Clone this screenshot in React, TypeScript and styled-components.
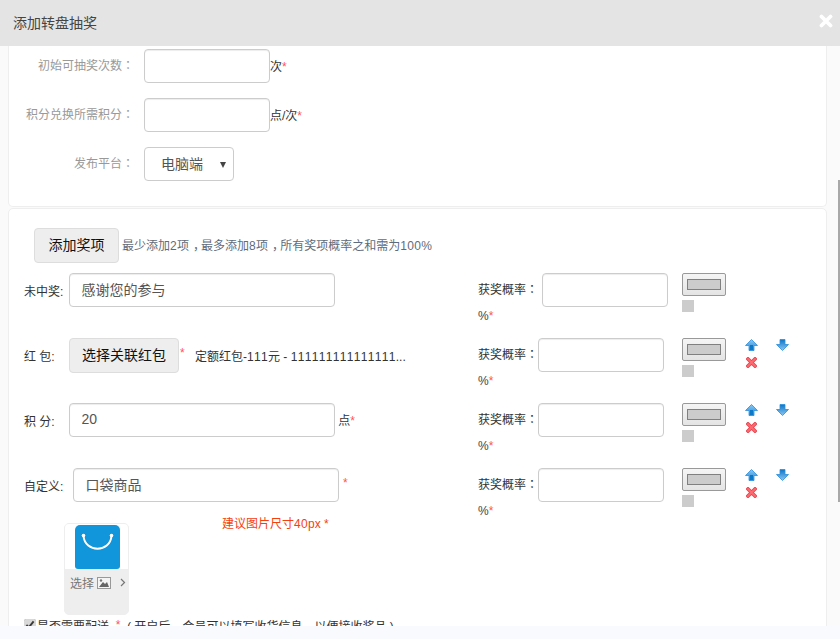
import styled, { createGlobalStyle } from 'styled-components'

const GlobalStyle = createGlobalStyle`
  html, body {
    margin: 0;
    height: 100%;
    overflow: hidden;
    background: #fafafa;
    font-family: "Liberation Sans", "Noto Sans CJK SC", sans-serif;
    font-size: 12px;
    color: #333;
  }
  * {
    box-sizing: border-box;
  }
`

const UpArrow = () => (
  <svg width="13" height="12" viewBox="0 0 13 12">
    <defs>
      <linearGradient id="upFill" x1="0" y1="0" x2="0" y2="1">
        <stop offset="0" stopColor="#8cc8f4" />
        <stop offset="1" stopColor="#1c86d6" />
      </linearGradient>
    </defs>
    <path d="M6.5 0.5 L12.5 6.5 H9 V11.5 H4 V6.5 H0.5 Z" fill="url(#upFill)" stroke="#2b8fdc" strokeWidth="0.8" />
    <rect x="5" y="6" width="3" height="5" fill="#0c78c8" />
  </svg>
)

const DownArrow = () => (
  <svg width="13" height="12" viewBox="0 0 13 12">
    <defs>
      <linearGradient id="downFill" x1="0" y1="0" x2="0" y2="1">
        <stop offset="0" stopColor="#0c74c4" />
        <stop offset="1" stopColor="#8cc8f4" />
      </linearGradient>
    </defs>
    <path d="M4 0.5 H9 V5.5 H12.5 L6.5 11.5 L0.5 5.5 H4 Z" fill="url(#downFill)" stroke="#2b8fdc" strokeWidth="0.8" />
  </svg>
)

const DeleteIcon = () => (
  <svg width="11" height="11" viewBox="0 0 11 11">
    <path d="M2 2 L9 9 M9 2 L2 9" stroke="#e8404c" strokeWidth="3.6" strokeLinecap="square" />
    <path d="M2 2 L9 9 M9 2 L2 9" stroke="#fb6a70" strokeWidth="2" strokeLinecap="square" />
  </svg>
)

const CloseIcon = () => (
  <svg width="14" height="14" viewBox="0 0 14 14">
    <path d="M2.5 2.5 L11.5 11.5 M11.5 2.5 L2.5 11.5" stroke="#fff" strokeWidth="3.8" strokeLinecap="round" />
  </svg>
)

const BagIcon = () => (
  <svg width="45" height="44" viewBox="0 0 45 44">
    <path d="M5 0 H40 A5 5 0 0 1 45 5 V41 A3 3 0 0 1 42 44 H3 A3 3 0 0 1 0 41 V5 A5 5 0 0 1 5 0 Z" fill="#1296db" />
    <path d="M8.5 11 C10 28 35 28 36.5 11" fill="none" stroke="#fff" strokeWidth="2" />
    <circle cx="8.5" cy="10.5" r="1.8" fill="#fff" />
    <circle cx="36.5" cy="10.5" r="1.8" fill="#fff" />
  </svg>
)

const PictureIcon = () => (
  <svg width="14" height="12" viewBox="0 0 14 12">
    <rect x="0.5" y="0.5" width="13" height="11" fill="#f4f4f4" stroke="#999" />
    <path d="M2 10 L6 5 L8 7 L10 5 L12 10 Z" fill="#666" />
    <circle cx="4" cy="3.5" r="1.2" fill="#777" />
  </svg>
)

const ChevronIcon = () => (
  <svg width="6" height="9" viewBox="0 0 6 9">
    <path d="M1 1 L4.5 4.5 L1 8" fill="none" stroke="#777" strokeWidth="1.2" />
  </svg>
)

const ColorPicker = () => (
  <PickerColumn>
    <PickerButton><PickerSwatch /></PickerButton>
    <PickerChip />
  </PickerColumn>
)

type ProbabilityProps = { wide?: boolean, tools?: boolean }

const Probability = ({ wide, tools }: ProbabilityProps) => (
  <>
    <ProbabilityColumn>
      <ProbabilityField>
        <ProbabilityLabel $wide={wide}>获奖概率<Colon>：</Colon></ProbabilityLabel>
        <TextInput $width={126} readOnly />
      </ProbabilityField>
      <Percent>%<Star>*</Star></Percent>
    </ProbabilityColumn>
    <ColorPicker />
    {tools && <Tools>
      <ToolRow>
        <UpArrow />
        <DownArrow />
      </ToolRow>
      <DeleteSlot><DeleteIcon /></DeleteSlot>
    </Tools>}
  </>
)

const App = () => (
  <Page>
    <GlobalStyle />
    <Header>
      <Title>添加转盘抽奖</Title>
      <CloseButton><CloseIcon /></CloseButton>
    </Header>
    <Body>
      <SettingsCard>
        <SettingRow>
          <SettingLabel>初始可抽奖次数<Colon>：</Colon></SettingLabel>
          <TextInput $width={126} readOnly />
          <Unit>次<Star>*</Star></Unit>
        </SettingRow>
        <SettingRow>
          <SettingLabel>积分兑换所需积分<Colon>：</Colon></SettingLabel>
          <TextInput $width={126} readOnly />
          <Unit>点/次<Star>*</Star></Unit>
        </SettingRow>
        <SettingRow>
          <SettingLabel>发布平台<Colon>：</Colon></SettingLabel>
          <SelectBox>电脑端</SelectBox>
        </SettingRow>
      </SettingsCard>
      <PrizeCard>
        <AddRow>
          <GrayButton $width={85}>添加奖项</GrayButton>
          <Hint>
            最少添加<Digits>2</Digits>项<Comma>，</Comma>最多添加<Digits>8</Digits>项<Comma>，</Comma>所有奖项概率之和需为<Digits>100</Digits>%
          </Hint>
        </AddRow>
        <PrizeRow>
          <PrizeMain>
            <PrizeLabel>未中奖:</PrizeLabel>
            <TextInput $width={266} defaultValue="感谢您的参与" readOnly />
          </PrizeMain>
          <Probability wide />
        </PrizeRow>
        <PrizeRow>
          <PrizeMain>
            <PrizeLabel>红 包:</PrizeLabel>
            <GrayButton $width={110}>选择关联红包</GrayButton>
            <FieldStar>*</FieldStar>
            <LinkedPacket>定额红包-<Digits>111</Digits>元 - <Digits>111111111111111</Digits>...</LinkedPacket>
          </PrizeMain>
          <Probability tools />
        </PrizeRow>
        <PrizeRow>
          <PrizeMain>
            <PrizeLabel>积 分:</PrizeLabel>
            <TextInput $width={266} defaultValue="20" readOnly />
            <Unit>&nbsp;点<Star>*</Star></Unit>
          </PrizeMain>
          <Probability tools />
        </PrizeRow>
        <PrizeRow $short>
          <PrizeMain>
            <PrizeLabel $wide>自定义:</PrizeLabel>
            <TextInput $width={266} defaultValue="口袋商品" readOnly />
            <FieldStar $gap={3}>*</FieldStar>
          </PrizeMain>
          <Probability tools />
        </PrizeRow>
        <ImageRow>
          <ImagePicker>
            <ImagePreview><BagIcon /></ImagePreview>
            <ImageAction>
              选择
              <PictureIcon />
              <ChevronSlot><ChevronIcon /></ChevronSlot>
            </ImageAction>
          </ImagePicker>
          <SizeHint>建议图片尺寸<Digits>40</Digits>px *</SizeHint>
        </ImageRow>
        <ShippingRow>
          <ShippingCheck type="checkbox" defaultChecked />
          是否需要配送 <Star>&nbsp;*&nbsp;</Star> ( 开启后<Comma>，</Comma>会员可以填写收货信息<Comma>，</Comma>以便接收奖品 )
        </ShippingRow>
      </PrizeCard>
      <ScrollThumb />
    </Body>
    <Footer />
  </Page>
)

export default App

const Page = styled.div`
  display: flex;
  flex-direction: column;
  height: 639px;
  overflow: hidden;
`
const Header = styled.header`
  display: flex;
  align-items: center;
  justify-content: space-between;
  flex: 0 0 46px;
  padding: 0 7px 0 13px;
  background: #e4e4e4;
`
const Title = styled.h1`
  margin: -2px 0 0;
  font-size: 14px;
  font-weight: normal;
  color: #444;
`
const CloseButton = styled.span`
  display: flex;
  margin-top: -4px;
`
const Body = styled.main`
  position: relative;
  flex: 0 0 580px;
  overflow: hidden;
  padding: 0 13px 0 8px;
  background: #fafafa;
`
const Footer = styled.footer`
  flex: 1;
  background: #f9fafe;
`
const ScrollThumb = styled.div`
  position: absolute;
  top: 134px;
  right: 0;
  width: 2px;
  height: 322px;
  background: #a8a8a8;
`
const SettingsCard = styled.section`
  height: 161px;
  padding-top: 3px;
  background: #fff;
  border: 1px solid #eeeeee;
  border-top: 0;
  border-radius: 0 0 5px 5px;
`
const PrizeCard = styled.section`
  margin-top: 1px;
  height: 440px;
  padding: 19px 0 0 15px;
  background: #fff;
  border: 1px solid #eeeeee;
  border-radius: 5px;
`
const SettingRow = styled.div`
  display: flex;
  align-items: center;
  height: 34px;
  margin-bottom: 15px;
`
const SettingLabel = styled.label`
  width: 125px;
  margin-right: 10px;
  padding-bottom: 3px;
  text-align: right;
  color: #999;
`
const Colon = styled.span`
  font-family: "Noto Sans CJK TC", sans-serif;
`
const Comma = styled.span`
  display: inline-block;
  margin: 0 -4px 0 4px;
`
const Digits = styled.span`
  font-kerning: none;
  letter-spacing: .33px;
`
const TextInput = styled.input<{ $width: number }>`
  flex: none;
  width: ${p => p.$width}px;
  height: 34px;
  padding: 5px 11.5px 7px;
  background: #fff;
  border: 1px solid #ccc;
  border-radius: 4px;
  box-shadow: inset 0 1px 1px rgba(0, 0, 0, .075);
  font: inherit;
  font-size: 14px;
  color: #555;
  outline: none;
`
const Unit = styled.span`
  padding-bottom: 2px;
  color: #333;
`
const Star = styled.span`
  color: #f55;
`
const FieldStar = styled(Star)<{ $gap?: number }>`
  flex: none;
  width: 16px;
  margin-left: ${p => p.$gap || 0}px;
  padding: 0 0 4px 1px;
`
const SelectBox = styled.div`
  position: relative;
  width: 90px;
  height: 34px;
  padding: 0 16px;
  background: #fff;
  border: 1px solid #ccc;
  border-radius: 4px;
  font-size: 14px;
  line-height: 32px;
  color: #555;
  &::after {
    content: "";
    position: absolute;
    top: 14px;
    right: 7px;
    border: 3px solid transparent;
    border-top: 6px solid #444;
    border-bottom: 0;
  }
`
const AddRow = styled.div`
  display: flex;
  align-items: center;
  height: 45px;
  padding: 0 0 10px 10px;
`
const GrayButton = styled.span<{ $width: number }>`
  flex: none;
  width: ${p => p.$width}px;
  height: 35px;
  background: #eeeeee;
  border: 1px solid #ddd;
  border-radius: 4px;
  font-size: 14px;
  line-height: 33px;
  text-align: center;
  color: #111;
`
const Hint = styled.span`
  margin-left: 3px;
  padding-bottom: 2px;
  color: #5f6b7a;
`
const PrizeRow = styled.div<{ $short?: boolean }>`
  display: flex;
  align-items: flex-start;
  height: ${p => p.$short ? 49 : 65}px;
`
const PrizeMain = styled.div`
  display: flex;
  align-items: center;
  flex: 0 0 454px;
  height: 34px;
`
const PrizeLabel = styled.label<{ $wide?: boolean }>`
  flex: none;
  width: ${p => p.$wide ? 49 : 45}px;
  color: #333;
`
const LinkedPacket = styled.span`
  padding-top: 1px;
  color: #333;
  white-space: nowrap;
`
const ProbabilityColumn = styled.div`
  flex: 0 0 204px;
`
const ProbabilityField = styled.div`
  display: flex;
  align-items: center;
  height: 34px;
`
const ProbabilityLabel = styled.label<{ $wide?: boolean }>`
  flex: none;
  width: ${p => p.$wide ? 64 : 60}px;
  padding-bottom: 3px;
  color: #333;
  white-space: nowrap;
`
const Percent = styled.div`
  margin-top: 2px;
  line-height: 14px;
  color: #444;
`
const PickerColumn = styled.div`
  flex: 0 0 62px;
`
const PickerButton = styled.span`
  display: flex;
  align-items: center;
  justify-content: center;
  width: 44px;
  height: 23px;
  background: linear-gradient(#f5f5f5, #e4e4e4);
  border: 1px solid #999;
  border-radius: 2px;
`
const PickerSwatch = styled.span`
  width: 34px;
  height: 11px;
  background: #ccc;
  border: 1px solid #808080;
`
const PickerChip = styled.span`
  display: block;
  width: 12px;
  height: 12px;
  margin-top: 4px;
  background: #ccc;
`
const Tools = styled.div`
  width: 45px;
  padding: 1px 0 0 1px;
`
const ToolRow = styled.div`
  display: flex;
  justify-content: space-between;
  height: 12px;
`
const DeleteSlot = styled.div`
  display: flex;
  margin: 6px 0 0 1px;
`
const ImageRow = styled.div`
  display: flex;
  align-items: flex-start;
  padding-left: 40px;
`
const ImagePicker = styled.div`
  width: 65px;
  height: 92px;
  margin-top: 6px;
  overflow: hidden;
  background: #eee;
  border: 1px solid #eee;
  border-radius: 5px;
`
const ImagePreview = styled.div`
  display: flex;
  justify-content: center;
  height: 45px;
  padding: 1px 0 0 2px;
  background: #fff;
`
const ImageAction = styled.div`
  display: flex;
  align-items: center;
  padding: 5px 0 0 5px;
  color: #777;
  svg:first-of-type {
    margin-left: 3px;
  }
`
const ChevronSlot = styled.span`
  display: flex;
  margin-left: 6px;
`
const SizeHint = styled.span`
  margin-left: 93px;
  line-height: 14px;
  color: #f43f0f;
`
const ShippingRow = styled.div`
  display: flex;
  align-items: center;
  height: 14px;
  margin: 3px 0 0 0;
  white-space: pre;
  color: #333;
`
const ShippingCheck = styled.input`
  width: 12px;
  height: 12px;
  margin: 0 1px 0 0;
  accent-color: #d8d8d8;
`
